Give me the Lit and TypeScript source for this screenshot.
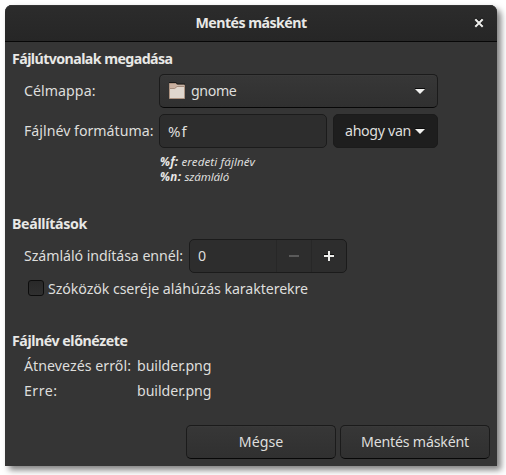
import { LitElement, html, css } from "lit";
import { customElement, property } from "lit/decorators.js";

/** A line of text whose tracking is tuned so that it fills `width` pixels. */
@customElement("fit-text")
class FitText extends LitElement {
  @property({ type: Number }) width = 0;
  @property() text = "";

  static styles = css`
    :host { display: block; height: 20px; line-height: 20px; white-space: nowrap; }
    .run { display: inline-block; white-space: nowrap; }
  `;

  render() {
    return html`<span class="run">${this.text}</span>`;
  }

  firstUpdated() {
    const run = this.renderRoot.querySelector<HTMLElement>(".run")!;
    const natural = run.getBoundingClientRect().width;
    const gap = (this.width - natural) / this.text.length;
    run.style.letterSpacing = `${gap.toFixed(3)}px`;
  }
}

@customElement("app-root")
class AppRoot extends LitElement {
  static styles = css`
    :host {
      display: block;
      box-sizing: border-box;
      width: 506px;
      height: 475px;
      padding: 5px;
      overflow: hidden;
      background: #fff;
      color: #dededc;
      font: 14.2px "Noto Sans", sans-serif;
    }
    * { box-sizing: border-box; }
    svg { display: block; flex: none; }
    .window {
      display: flex;
      flex-direction: column;
      width: 492px;
      height: 461px;
      background: #353535;
      border-radius: 7px 7px 0 0;
      box-shadow: 4px 4px 6px rgba(0, 0, 0, 0.5);
    }
    .header {
      display: grid;
      grid-template-columns: 36px 1fr 36px;
      align-items: center;
      justify-items: center;
      height: 37px;
      background: linear-gradient(#2c2c2c, #262626);
      border-bottom: 1px solid #070707;
      border-radius: 7px 7px 0 0;
      box-shadow: inset 0 1px #343434;
      font-weight: 700;
    }
    .content { display: flex; flex-direction: column; padding: 7px; flex: 1; }
    .bold { font-weight: 700; color: #e8e8e6; }
    .body { padding-left: 12px; }
    .paths {
      display: grid;
      grid-template-columns: 129px 279px;
      column-gap: 6px;
      row-gap: 6px;
      margin-top: 5px;
      align-items: center;
    }
    .pair { display: grid; grid-template-columns: 168px 105px; gap: 6px; }
    .box {
      display: flex;
      align-items: center;
      height: 34px;
      border: 1px solid #1b1b1b;
      border-radius: 5px;
    }
    .raised {
      background: linear-gradient(#373737, #303030);
      border-bottom-color: #070707;
      box-shadow: inset 0 1px rgba(255, 255, 255, 0.02);
    }
    .combo { padding: 0 11px 0 9px; }
    .combo .name { margin-left: 6px; flex: 1; }
    .entry { background: #2d2d2d; padding-left: 8px; }
    .format { font-size: 15px; }
    .pressed { background: #1e1e1e; padding: 0 11px; justify-content: space-between; }
    .hints { margin: 6px 0 0 136px; font-size: 11.6px; font-style: italic; }
    .hint { display: flex; height: 15px; align-items: center; }
    .hint fit-text { height: 15px; line-height: 15px; }
    .hint .bold { margin-right: 3px; }
    .settings { margin-top: 30px; }
    .row { display: flex; align-items: center; }
    .count { margin-top: 5px; gap: 6px; }
    .spin { width: 158px; background: #2d2d2d; }
    .value { flex: 1; padding-left: 8px; }
    .step {
      display: flex;
      align-items: center;
      justify-content: center;
      width: 35px;
      height: 32px;
      border-left: 1px solid #272727;
    }
    .check { margin-top: 6px; padding-left: 4px; gap: 4px; }
    .checkbox {
      width: 16px;
      height: 16px;
      margin-bottom: 2px;
      border: 1px solid #0d0d0d;
      border-radius: 3px;
      background: linear-gradient(#292929, #303030);
    }
    .preview { margin-top: 32px; }
    .pairs {
      display: grid;
      grid-template-columns: 107px 1fr;
      gap: 5px 6px;
      margin-top: 5px;
    }
    .actions { display: flex; justify-content: flex-end; gap: 4px; margin-top: auto; }
    .action { width: 150px; justify-content: center; }
  `;

  private text(text: string, width: number, cls = "") {
    return html`<fit-text class=${cls} .text=${text} .width=${width}></fit-text>`;
  }

  private arrow() {
    return html`<svg width="12" height="8" viewBox="0 0 12 8">
      <path d="M1 1h10v1H1z" fill="#0c0c0c" />
      <path d="M1 2h10L6 7z" fill="#f2f2f0" />
    </svg>`;
  }

  render() {
    return html`
      <div class="window">
        <header class="header">
          <span></span>
          ${this.text("Mentés másként", 111, "bold")}
          <svg width="12" height="12" viewBox="0 0 12 12">
            <path d="M2.3 1.3l7.4 7.4M9.7 1.3L2.3 8.7" stroke="#0c0c0c" stroke-width="2" />
            <path d="M2.3 2.3l7.4 7.4M9.7 2.3L2.3 9.7" stroke="#eeeeec" stroke-width="2" />
          </svg>
        </header>
        <main class="content">
          <section>
            ${this.text("Fájlútvonalak megadása", 160.5, "bold")}
            <div class="body">
              <div class="paths">
                ${this.text("Célmappa:", 71.5)}
                <div class="box raised combo">
                  <svg width="16" height="18" viewBox="0 0 16 18">
                    <path d="M0 0h7l1.5 1.5H16v3H0z" fill="#191919" />
                    <path d="M.5 1.5h6.3l1.5 1.5h7.2v13.5H.5z" fill="#e0d7ce" />
                    <path d="M.5 1.5h6.3l1 1.5v2L6 6.5H.5z" fill="#c9b0a0" />
                    <path d="M.5 6.5h5.2L8 4.5h7.5" fill="none" stroke="#a58d7d" />
                    <path d="M.5 1.5h6.3l1.5 1.5h7.2v13.5H.5z" fill="none" stroke="#ad9482" />
                  </svg>
                  ${this.text("gnome", 45.5, "name")}
                  ${this.arrow()}
                </div>
                ${this.text("Fájlnév formátuma:", 129.5)}
                <div class="pair">
                  <div class="box entry">${this.text("%f", 19.5, "format")}</div>
                  <div class="box pressed">${this.text("ahogy van", 66)}${this.arrow()}</div>
                </div>
              </div>
              <div class="hints">
                <div class="hint">${this.text("%f:", 18.5, "bold")}${this.text("eredeti fájlnév", 73.5)}</div>
                <div class="hint">${this.text("%n:", 21.5, "bold")}${this.text("számláló", 44.5)}</div>
              </div>
            </div>
          </section>
          <section class="settings">
            ${this.text("Beállítások", 75, "bold")}
            <div class="body">
              <div class="row count">
                ${this.text("Számláló indítása ennél:", 159)}
                <div class="box spin">
                  ${this.text("0", 9, "value")}
                  <span class="step">
                    <svg width="10" height="10"><path d="M0 4h10v2H0z" fill="#5a5a5a" /></svg>
                  </span>
                  <span class="step">
                    <svg width="10" height="10">
                      <path d="M0 3h10v1H0z" fill="#0c0c0c" />
                      <path d="M0 4h10v2H0zM4 0h2v10H4z" fill="#eeeeec" />
                    </svg>
                  </span>
                </div>
              </div>
              <div class="row check">
                <span class="checkbox"></span>
                ${this.text("Szóközök cseréje aláhúzás karakterekre", 260)}
              </div>
            </div>
          </section>
          <section class="preview">
            ${this.text("Fájlnév előnézete", 115.5, "bold")}
            <div class="body pairs">
              ${this.text("Átnevezés erről:", 107)}${this.text("builder.png", 74.5)}
              ${this.text("Erre:", 33.5)}${this.text("builder.png", 74.5)}
            </div>
          </section>
          <footer class="actions">
            <div class="box raised action">${this.text("Mégse", 44.5)}</div>
            <div class="box raised action">${this.text("Mentés másként", 108)}</div>
          </footer>
        </main>
      </div>
    `;
  }
}
